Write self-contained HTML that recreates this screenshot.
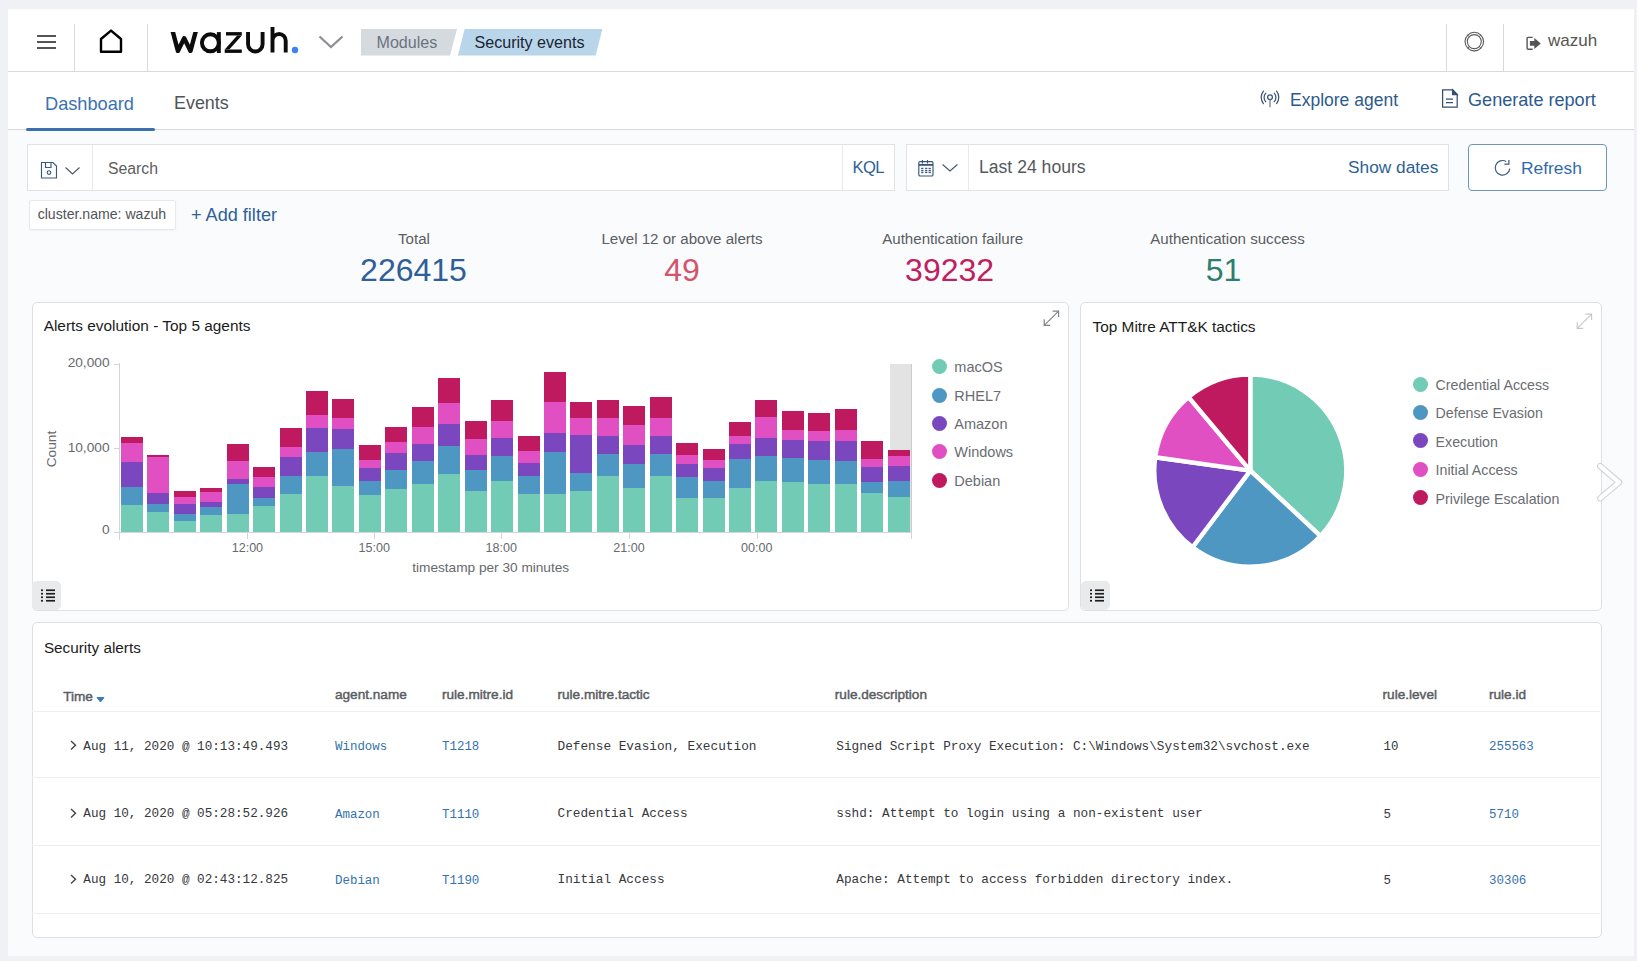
<!DOCTYPE html>
<html><head><meta charset="utf-8"><title>Wazuh - Security events</title>
<style>
html,body{margin:0;padding:0;}
body{width:1637px;height:961px;overflow:hidden;background:#f0f1f5;position:relative;font-family:'Liberation Sans',sans-serif;}
.t{position:absolute;white-space:nowrap;}
.r{position:absolute;}
</style></head><body>
<div class="r" style="left:8px;top:9px;width:1626px;height:947px;background:#fafbfd;"></div>
<div class="r" style="left:8px;top:9px;width:1626px;height:62px;background:#fff;"></div>
<div class="r" style="left:8px;top:71px;width:1626px;height:1px;background:#d9d9da;"></div>
<div class="r" style="left:74px;top:24px;width:1px;height:47px;background:#d9d9da;"></div>
<div class="r" style="left:147px;top:24px;width:1px;height:47px;background:#d9d9da;"></div>
<div class="r" style="left:1446px;top:24px;width:1px;height:47px;background:#d9d9da;"></div>
<div class="r" style="left:1503px;top:24px;width:1px;height:47px;background:#d9d9da;"></div>
<div class="r" style="left:37px;top:34.8px;width:19px;height:2.6000000000000014px;background:#555;"></div>
<div class="r" style="left:37px;top:40.8px;width:19px;height:2.6000000000000014px;background:#555;"></div>
<div class="r" style="left:37px;top:46.8px;width:19px;height:2.6000000000000014px;background:#555;"></div>
<svg class="r" style="left:96px;top:26px" width="30" height="30" viewBox="0 0 30 30"><path d="M5 13 L15 4.6 L25 13 L25 25.8 L5 25.8 Z" fill="none" stroke="#000" stroke-width="2.4" stroke-linejoin="round"/></svg>
<svg class="r" style="left:165px;top:20px" width="140" height="40" viewBox="0 0 140 40">
<defs><clipPath id="wc"><rect x="0" y="12.1" width="40" height="21"/></clipPath></defs>
<g fill="none" stroke="#0c0c0c" stroke-width="3.9" stroke-linecap="butt" stroke-linejoin="round">
<path d="M7.1 9 L12.9 30.9 L19.2 18.2 L25.5 30.9 L31.4 9" stroke-width="4.4" clip-path="url(#wc)"/>
<circle cx="45.4" cy="22.8" r="8.5"/><path d="M53.85 12.1 L53.85 33"/>
<path d="M83.05 12.1 L83.05 24.2 A7.27 7.27 0 0 0 97.6 24.2 L97.6 12.1"/>
<path d="M107.5 6.9 L107.5 32.6 M107.5 20.65 A6.6 6.6 0 0 1 120.7 20.65 L120.7 32.6"/>
</g>
<g fill="#0c0c0c"><rect x="61" y="12.1" width="15.8" height="3.4"/><rect x="59.7" y="29.5" width="17.1" height="3.4"/><path d="M72.2 15.4 L76.8 15.4 L64.3 29.6 L59.7 29.6 Z"/></g>
<circle cx="130" cy="30" r="3.2" fill="#3d82f1"/></svg>
<svg class="r" style="left:316px;top:33px" width="30" height="18" viewBox="0 0 30 18"><path d="M3.5 3.5 L15 14 L26.5 3.5" fill="none" stroke="#8e8f92" stroke-width="2.3"/></svg>
<svg class="r" style="left:355px;top:25px" width="260" height="35" viewBox="0 0 260 35"><path d="M6 4 L102 4 L95 30.5 L6 30.5 Z" fill="#d5dadf"/><path d="M109.6 4 L247.4 4 L240.7 30.5 L103 30.5 Z" fill="#b9d5ea"/></svg>
<div class="t" style="left:376.50px;top:34.37px;font-size:16.1px;line-height:16.1px;color:#6b7380;font-weight:normal;font-family:'Liberation Sans',sans-serif;">Modules</div>
<div class="t" style="left:474.50px;top:34.37px;font-size:16.1px;line-height:16.1px;color:#1b2433;font-weight:normal;font-family:'Liberation Sans',sans-serif;">Security events</div>
<svg class="r" style="left:1462px;top:30px" width="25" height="25" viewBox="0 0 25 25"><circle cx="12.3" cy="11.6" r="9.3" fill="none" stroke="#5a5a5a" stroke-width="1.1"/><circle cx="12.3" cy="11.6" r="7.0" fill="none" stroke="#5a5a5a" stroke-width="1.1"/><path d="M7.35 6.65 L5.7 5.0 M17.25 6.65 L18.9 5.0 M7.35 16.55 L5.7 18.2 M17.25 16.55 L18.9 18.2" stroke="#5a5a5a" stroke-width="1"/></svg>
<svg class="r" style="left:1524px;top:34px" width="20" height="18" viewBox="0 0 20 18"><path d="M8.6 3.4 L4.2 3.4 Q3.1 3.4 3.1 4.5 L3.1 14.2 Q3.1 15.3 4.2 15.3 L8.6 15.3" fill="none" stroke="#555" stroke-width="1.4"/><path d="M5.9 7.1 L10.3 7.1 L10.3 4.1 L16.8 9.4 L10.3 14.9 L10.3 11.8 L5.9 11.8 Z" fill="#555"/></svg>
<div class="t" style="left:1548.00px;top:32.01px;font-size:17px;line-height:17px;color:#555;font-weight:normal;font-family:'Liberation Sans',sans-serif;">wazuh</div>
<div class="r" style="left:8px;top:72px;width:1626px;height:57px;background:#fff;"></div>
<div class="r" style="left:8px;top:129px;width:1626px;height:1px;background:#d9d9da;"></div>
<div class="r" style="left:25.5px;top:127.5px;width:129.0px;height:3.0px;background:#3b70ae;border-radius:2px;"></div>
<div class="t" style="left:45.00px;top:94.59px;font-size:18.2px;line-height:18.2px;color:#3a72b2;font-weight:normal;font-family:'Liberation Sans',sans-serif;">Dashboard</div>
<div class="t" style="left:174.00px;top:95.35px;font-size:17.9px;line-height:17.9px;color:#505459;font-weight:normal;font-family:'Liberation Sans',sans-serif;">Events</div>
<svg class="r" style="left:1258px;top:88px" width="24" height="22" viewBox="0 0 24 22"><g fill="none" stroke="#3b5676" stroke-width="1.25" stroke-linecap="round">
<path d="M5.4 3.1 A10 10 0 0 0 5.4 15.6"/><path d="M7.8 5.1 A6.3 6.3 0 0 0 7.8 13.7"/><path d="M18.6 3.1 A10 10 0 0 1 18.6 15.6"/><path d="M16.2 5.1 A6.3 6.3 0 0 1 16.2 13.7"/>
<circle cx="12" cy="9.3" r="2.4"/><path d="M12 11.7 L12 18.7" stroke="#6f7c8c"/></g></svg>
<div class="t" style="left:1290.00px;top:91.69px;font-size:17.5px;line-height:17.5px;color:#2d5a8c;font-weight:normal;font-family:'Liberation Sans',sans-serif;">Explore agent</div>
<svg class="r" style="left:1439px;top:87px" width="22" height="24" viewBox="0 0 22 24"><g fill="none" stroke="#34506e" stroke-width="1.25">
<path d="M3.6 2.8 L13.6 2.8 L18.2 7.6 L18.2 20.1 L3.6 20.1 Z"/><path d="M13.6 2.8 L13.6 7.6 L18.2 7.6 Z" fill="#34506e"/><path d="M7 12.2 L14 12.2 M7 15.5 L14 15.5"/></g></svg>
<div class="t" style="left:1468.00px;top:90.98px;font-size:18.1px;line-height:18.1px;color:#2d5a8c;font-weight:normal;font-family:'Liberation Sans',sans-serif;">Generate report</div>
<div class="r" style="left:26.5px;top:144px;width:868.0px;height:46.5px;background:#fff;border:1px solid #e0e2e6;box-sizing:border-box;"></div>
<div class="r" style="left:92px;top:145px;width:1px;height:45px;background:#e6e9ee;"></div>
<div class="r" style="left:842px;top:145px;width:1px;height:45px;background:#e6e9ee;"></div>
<svg class="r" style="left:38px;top:158.5px" width="22" height="22" viewBox="0 0 22 22"><g fill="none" stroke="#3b5a7f" stroke-width="1.15">
<path d="M3.5 3.5 L15 3.5 L18.5 7 L18.5 19 L3.5 19 Z"/><path d="M7.5 3.5 L7.5 8.5 L13 8.5 L13 3.5"/><circle cx="11" cy="13.5" r="1.8"/></g></svg>
<svg class="r" style="left:63px;top:163.5px" width="20" height="14" viewBox="0 0 20 14"><path d="M2.5 3.5 L9.5 10 L16.5 3.5" fill="none" stroke="#4b5867" stroke-width="1.1"/></svg>
<div class="t" style="left:108.00px;top:160.63px;font-size:15.8px;line-height:15.8px;color:#5b5e63;font-weight:normal;font-family:'Liberation Sans',sans-serif;">Search</div>
<div class="t" style="left:852.50px;top:159.95px;font-size:16.6px;line-height:16.6px;color:#2d5f99;font-weight:normal;font-family:'Liberation Sans',sans-serif;letter-spacing:-0.6px;">KQL</div>
<div class="r" style="left:905.5px;top:144px;width:543.0px;height:46.5px;background:#fff;border:1px solid #e0e2e6;box-sizing:border-box;"></div>
<div class="r" style="left:968px;top:145px;width:1px;height:45px;background:#e6e9ee;"></div>
<svg class="r" style="left:915px;top:157px" width="22" height="22" viewBox="0 0 22 22"><g fill="none" stroke="#36587e" stroke-width="1.15">
<rect x="3.8" y="4.6" width="14.2" height="14.4" rx="1.3"/><path d="M3.8 7.9 L18 7.9" stroke-width="1.8"/><path d="M7.4 3 L7.4 6.5 M12.5 3 L12.5 6.5"/></g>
<g fill="#36587e"><rect x="6.2" y="10.8" width="2.2" height="1.3"/><rect x="10.1" y="10.8" width="2.2" height="1.3"/><rect x="13.6" y="10.8" width="2.2" height="1.3"/><rect x="6.2" y="12.9" width="2.2" height="1.3"/><rect x="10.1" y="12.9" width="2.2" height="1.3"/><rect x="13.6" y="12.9" width="2.2" height="1.3"/><rect x="6.2" y="14.8" width="2.2" height="1.3"/><rect x="10.1" y="14.8" width="2.2" height="1.3"/><rect x="13.6" y="14.8" width="2.2" height="1.3"/></g></svg>
<svg class="r" style="left:940px;top:161px" width="20" height="14" viewBox="0 0 20 14"><path d="M2.6 3.5 L10 10 L17.4 3.5" fill="none" stroke="#46556a" stroke-width="1.1"/></svg>
<div class="t" style="left:979.00px;top:159.10px;font-size:17.6px;line-height:17.6px;color:#55585d;font-weight:normal;font-family:'Liberation Sans',sans-serif;">Last 24 hours</div>
<div class="t" style="left:1348.00px;top:159.36px;font-size:17.3px;line-height:17.3px;color:#2d5f99;font-weight:normal;font-family:'Liberation Sans',sans-serif;">Show dates</div>
<div class="r" style="left:1468px;top:144px;width:139px;height:47px;background:#fff;border:1px solid #6e95be;border-radius:4px;box-sizing:border-box;"></div>
<svg class="r" style="left:1492px;top:158px" width="20" height="20" viewBox="0 0 20 20"><g fill="none" stroke="#3f5a78" stroke-width="1.2"><path d="M17.8 10.6 A7.3 7.3 0 1 1 14.15 3.48"/><path d="M12.4 6.1 L16.9 6.1 L16.9 2.0"/></g></svg>
<div class="t" style="left:1521.00px;top:160.27px;font-size:17.4px;line-height:17.4px;color:#2f6bab;font-weight:normal;font-family:'Liberation Sans',sans-serif;">Refresh</div>
<div class="r" style="left:28.5px;top:200px;width:147.0px;height:30px;background:#fff;border:1px solid #e6e9ef;box-sizing:border-box;border-radius:2px;box-shadow:0 1px 2px rgba(0,0,0,0.04);"></div>
<div class="t" style="left:37.70px;top:207.36px;font-size:14.1px;line-height:14.1px;color:#505359;font-weight:normal;font-family:'Liberation Sans',sans-serif;">cluster.name: wazuh</div>
<div class="t" style="left:191.00px;top:205.68px;font-size:18.1px;line-height:18.1px;color:#2d5f99;font-weight:normal;font-family:'Liberation Sans',sans-serif;">+ Add filter</div>
<div class="t" style="left:14.00px;width:800px;text-align:center;top:231.02px;font-size:15.1px;line-height:15.1px;color:#5a5d62;font-weight:normal;font-family:'Liberation Sans',sans-serif;">Total</div>
<div class="t" style="left:13.50px;width:800px;text-align:center;top:253.51px;font-size:32px;line-height:32px;color:#2f5e99;font-weight:normal;font-family:'Liberation Sans',sans-serif;">226415</div>
<div class="t" style="left:282.00px;width:800px;text-align:center;top:231.02px;font-size:15.1px;line-height:15.1px;color:#5a5d62;font-weight:normal;font-family:'Liberation Sans',sans-serif;">Level 12 or above alerts</div>
<div class="t" style="left:282.00px;width:800px;text-align:center;top:253.51px;font-size:32px;line-height:32px;color:#d4546b;font-weight:normal;font-family:'Liberation Sans',sans-serif;">49</div>
<div class="t" style="left:552.70px;width:800px;text-align:center;top:231.02px;font-size:15.1px;line-height:15.1px;color:#5a5d62;font-weight:normal;font-family:'Liberation Sans',sans-serif;">Authentication failure</div>
<div class="t" style="left:549.60px;width:800px;text-align:center;top:253.51px;font-size:32px;line-height:32px;color:#bf2060;font-weight:normal;font-family:'Liberation Sans',sans-serif;">39232</div>
<div class="t" style="left:827.50px;width:800px;text-align:center;top:231.02px;font-size:15.1px;line-height:15.1px;color:#5a5d62;font-weight:normal;font-family:'Liberation Sans',sans-serif;">Authentication success</div>
<div class="t" style="left:823.50px;width:800px;text-align:center;top:253.51px;font-size:32px;line-height:32px;color:#2e7e6e;font-weight:normal;font-family:'Liberation Sans',sans-serif;">51</div>
<div class="r" style="left:32px;top:302px;width:1037px;height:309px;background:#fff;border:1px solid #dfe0e3;border-radius:5px;box-sizing:border-box;"></div>
<div class="r" style="left:1080px;top:302px;width:522px;height:309px;background:#fff;border:1px solid #dfe0e3;border-radius:5px;box-sizing:border-box;"></div>
<div class="t" style="left:43.70px;top:318.16px;font-size:15.4px;line-height:15.4px;color:#1a1c21;font-weight:normal;font-family:'Liberation Sans',sans-serif;">Alerts evolution - Top 5 agents</div>
<div class="t" style="left:1092.50px;top:319.16px;font-size:15.4px;line-height:15.4px;color:#1a1c21;font-weight:normal;font-family:'Liberation Sans',sans-serif;">Top Mitre ATT&amp;K tactics</div>
<svg class="r" style="left:1040.5px;top:309px" width="20" height="20" viewBox="0 0 20 20"><g fill="none" stroke="#7e8185" stroke-width="1.15"><path d="M3.2 16.3 L17.6 2.1"/><path d="M11.6 2.1 L17.6 2.1 L17.6 8.1"/><path d="M3.2 10.3 L3.2 16.3 L9.2 16.3"/></g></svg>
<svg class="r" style="left:1574px;top:311.5px" width="20" height="20" viewBox="0 0 20 20"><g fill="none" stroke="#c5c8cc" stroke-width="1.15"><path d="M3.2 16.3 L17.6 2.1"/><path d="M11.6 2.1 L17.6 2.1 L17.6 8.1"/><path d="M3.2 10.3 L3.2 16.3 L9.2 16.3"/></g></svg>
<div class="r" style="left:32.2px;top:580.8px;width:29.099999999999994px;height:29.0px;background:#e9eaec;border-radius:5px;"></div>
<svg class="r" style="left:39px;top:588px" width="18" height="15" viewBox="0 0 18 15"><g fill="#1e1e1e"><rect x="2" y="1.4" width="2" height="1.7"/><rect x="7" y="1.4" width="9" height="1.7"/><rect x="2" y="4.9" width="2" height="1.7"/><rect x="7" y="4.9" width="9" height="1.7"/><rect x="2" y="8.4" width="2" height="1.7"/><rect x="7" y="8.4" width="9" height="1.7"/><rect x="2" y="11.9" width="2" height="1.7"/><rect x="7" y="11.9" width="9" height="1.7"/></g></svg>
<div class="r" style="left:1081.2px;top:580.8px;width:29.09999999999991px;height:29.0px;background:#e9eaec;border-radius:5px;"></div>
<svg class="r" style="left:1088px;top:588px" width="18" height="15" viewBox="0 0 18 15"><g fill="#1e1e1e"><rect x="2" y="1.4" width="2" height="1.7"/><rect x="7" y="1.4" width="9" height="1.7"/><rect x="2" y="4.9" width="2" height="1.7"/><rect x="7" y="4.9" width="9" height="1.7"/><rect x="2" y="8.4" width="2" height="1.7"/><rect x="7" y="8.4" width="9" height="1.7"/><rect x="2" y="11.9" width="2" height="1.7"/><rect x="7" y="11.9" width="9" height="1.7"/></g></svg>
<svg class="r" style="left:0px;top:0px" width="1637" height="961" viewBox="0 0 1637 961" shape-rendering="crispEdges">
<rect x="890" y="364" width="22" height="168" fill="#e3e3e3"/><rect x="911" y="364" width="1" height="168" fill="#cbcbcb"/>
<rect x="121.0" y="504.7" width="22" height="27.3" fill="#72cbb5"/>
<rect x="121.0" y="487.3" width="22" height="17.4" fill="#4d97c2"/>
<rect x="121.0" y="461.7" width="22" height="25.6" fill="#7a47be"/>
<rect x="121.0" y="443.3" width="22" height="18.4" fill="#e050c2"/>
<rect x="121.0" y="436.8" width="22" height="6.5" fill="#bf1a5f"/>
<rect x="147.4" y="511.7" width="22" height="20.3" fill="#72cbb5"/>
<rect x="147.4" y="503.8" width="22" height="7.9" fill="#4d97c2"/>
<rect x="147.4" y="492.9" width="22" height="10.9" fill="#7a47be"/>
<rect x="147.4" y="456.8" width="22" height="36.1" fill="#e050c2"/>
<rect x="147.4" y="454.6" width="22" height="2.2" fill="#bf1a5f"/>
<rect x="173.9" y="520.6" width="22" height="11.4" fill="#72cbb5"/>
<rect x="173.9" y="513.9" width="22" height="6.7" fill="#4d97c2"/>
<rect x="173.9" y="504.2" width="22" height="9.7" fill="#7a47be"/>
<rect x="173.9" y="496.7" width="22" height="7.5" fill="#e050c2"/>
<rect x="173.9" y="491.1" width="22" height="5.6" fill="#bf1a5f"/>
<rect x="200.3" y="515.4" width="22" height="16.6" fill="#72cbb5"/>
<rect x="200.3" y="507.0" width="22" height="8.4" fill="#4d97c2"/>
<rect x="200.3" y="501.9" width="22" height="5.1" fill="#7a47be"/>
<rect x="200.3" y="491.6" width="22" height="10.3" fill="#e050c2"/>
<rect x="200.3" y="488.3" width="22" height="3.3" fill="#bf1a5f"/>
<rect x="226.7" y="513.9" width="22" height="18.1" fill="#72cbb5"/>
<rect x="226.7" y="483.6" width="22" height="30.3" fill="#4d97c2"/>
<rect x="226.7" y="478.9" width="22" height="4.7" fill="#7a47be"/>
<rect x="226.7" y="460.7" width="22" height="18.2" fill="#e050c2"/>
<rect x="226.7" y="443.7" width="22" height="17.0" fill="#bf1a5f"/>
<rect x="253.2" y="505.7" width="22" height="26.3" fill="#72cbb5"/>
<rect x="253.2" y="497.6" width="22" height="8.1" fill="#4d97c2"/>
<rect x="253.2" y="487.0" width="22" height="10.6" fill="#7a47be"/>
<rect x="253.2" y="476.6" width="22" height="10.4" fill="#e050c2"/>
<rect x="253.2" y="467.3" width="22" height="9.3" fill="#bf1a5f"/>
<rect x="279.6" y="493.9" width="22" height="38.1" fill="#72cbb5"/>
<rect x="279.6" y="475.7" width="22" height="18.2" fill="#4d97c2"/>
<rect x="279.6" y="456.8" width="22" height="18.9" fill="#7a47be"/>
<rect x="279.6" y="446.5" width="22" height="10.3" fill="#e050c2"/>
<rect x="279.6" y="428.0" width="22" height="18.5" fill="#bf1a5f"/>
<rect x="306.0" y="476.1" width="22" height="55.9" fill="#72cbb5"/>
<rect x="306.0" y="452.3" width="22" height="23.8" fill="#4d97c2"/>
<rect x="306.0" y="428.0" width="22" height="24.3" fill="#7a47be"/>
<rect x="306.0" y="414.7" width="22" height="13.3" fill="#e050c2"/>
<rect x="306.0" y="390.9" width="22" height="23.8" fill="#bf1a5f"/>
<rect x="332.4" y="485.8" width="22" height="46.2" fill="#72cbb5"/>
<rect x="332.4" y="448.6" width="22" height="37.2" fill="#4d97c2"/>
<rect x="332.4" y="429.3" width="22" height="19.3" fill="#7a47be"/>
<rect x="332.4" y="418.0" width="22" height="11.3" fill="#e050c2"/>
<rect x="332.4" y="399.3" width="22" height="18.7" fill="#bf1a5f"/>
<rect x="358.9" y="494.8" width="22" height="37.2" fill="#72cbb5"/>
<rect x="358.9" y="480.8" width="22" height="14.0" fill="#4d97c2"/>
<rect x="358.9" y="467.7" width="22" height="13.1" fill="#7a47be"/>
<rect x="358.9" y="459.8" width="22" height="7.9" fill="#e050c2"/>
<rect x="358.9" y="445.2" width="22" height="14.6" fill="#bf1a5f"/>
<rect x="385.3" y="488.8" width="22" height="43.2" fill="#72cbb5"/>
<rect x="385.3" y="470.1" width="22" height="18.7" fill="#4d97c2"/>
<rect x="385.3" y="452.7" width="22" height="17.4" fill="#7a47be"/>
<rect x="385.3" y="441.8" width="22" height="10.9" fill="#e050c2"/>
<rect x="385.3" y="426.5" width="22" height="15.3" fill="#bf1a5f"/>
<rect x="411.7" y="483.9" width="22" height="48.1" fill="#72cbb5"/>
<rect x="411.7" y="460.7" width="22" height="23.2" fill="#4d97c2"/>
<rect x="411.7" y="443.7" width="22" height="17.0" fill="#7a47be"/>
<rect x="411.7" y="426.8" width="22" height="16.9" fill="#e050c2"/>
<rect x="411.7" y="407.2" width="22" height="19.6" fill="#bf1a5f"/>
<rect x="438.2" y="473.8" width="22" height="58.2" fill="#72cbb5"/>
<rect x="438.2" y="445.8" width="22" height="28.0" fill="#4d97c2"/>
<rect x="438.2" y="424.2" width="22" height="21.6" fill="#7a47be"/>
<rect x="438.2" y="403.4" width="22" height="20.8" fill="#e050c2"/>
<rect x="438.2" y="378.3" width="22" height="25.1" fill="#bf1a5f"/>
<rect x="464.6" y="491.1" width="22" height="40.9" fill="#72cbb5"/>
<rect x="464.6" y="469.9" width="22" height="21.2" fill="#4d97c2"/>
<rect x="464.6" y="454.6" width="22" height="15.3" fill="#7a47be"/>
<rect x="464.6" y="438.6" width="22" height="16.0" fill="#e050c2"/>
<rect x="464.6" y="421.2" width="22" height="17.4" fill="#bf1a5f"/>
<rect x="491.0" y="480.8" width="22" height="51.2" fill="#72cbb5"/>
<rect x="491.0" y="456.0" width="22" height="24.8" fill="#4d97c2"/>
<rect x="491.0" y="438.1" width="22" height="17.9" fill="#7a47be"/>
<rect x="491.0" y="420.9" width="22" height="17.2" fill="#e050c2"/>
<rect x="491.0" y="399.9" width="22" height="21.0" fill="#bf1a5f"/>
<rect x="517.5" y="493.5" width="22" height="38.5" fill="#72cbb5"/>
<rect x="517.5" y="476.1" width="22" height="17.4" fill="#4d97c2"/>
<rect x="517.5" y="463.0" width="22" height="13.1" fill="#7a47be"/>
<rect x="517.5" y="451.2" width="22" height="11.8" fill="#e050c2"/>
<rect x="517.5" y="436.4" width="22" height="14.8" fill="#bf1a5f"/>
<rect x="543.9" y="493.9" width="22" height="38.1" fill="#72cbb5"/>
<rect x="543.9" y="451.7" width="22" height="42.2" fill="#4d97c2"/>
<rect x="543.9" y="433.4" width="22" height="18.3" fill="#7a47be"/>
<rect x="543.9" y="402.1" width="22" height="31.3" fill="#e050c2"/>
<rect x="543.9" y="372.2" width="22" height="29.9" fill="#bf1a5f"/>
<rect x="570.3" y="491.1" width="22" height="40.9" fill="#72cbb5"/>
<rect x="570.3" y="473.3" width="22" height="17.8" fill="#4d97c2"/>
<rect x="570.3" y="435.3" width="22" height="38.0" fill="#7a47be"/>
<rect x="570.3" y="417.5" width="22" height="17.8" fill="#e050c2"/>
<rect x="570.3" y="402.1" width="22" height="15.4" fill="#bf1a5f"/>
<rect x="596.7" y="475.7" width="22" height="56.3" fill="#72cbb5"/>
<rect x="596.7" y="453.6" width="22" height="22.1" fill="#4d97c2"/>
<rect x="596.7" y="436.4" width="22" height="17.2" fill="#7a47be"/>
<rect x="596.7" y="417.5" width="22" height="18.9" fill="#e050c2"/>
<rect x="596.7" y="399.9" width="22" height="17.6" fill="#bf1a5f"/>
<rect x="623.2" y="487.7" width="22" height="44.3" fill="#72cbb5"/>
<rect x="623.2" y="463.9" width="22" height="23.8" fill="#4d97c2"/>
<rect x="623.2" y="445.2" width="22" height="18.7" fill="#7a47be"/>
<rect x="623.2" y="425.0" width="22" height="20.2" fill="#e050c2"/>
<rect x="623.2" y="405.9" width="22" height="19.1" fill="#bf1a5f"/>
<rect x="649.6" y="476.1" width="22" height="55.9" fill="#72cbb5"/>
<rect x="649.6" y="453.6" width="22" height="22.5" fill="#4d97c2"/>
<rect x="649.6" y="436.4" width="22" height="17.2" fill="#7a47be"/>
<rect x="649.6" y="417.5" width="22" height="18.9" fill="#e050c2"/>
<rect x="649.6" y="396.9" width="22" height="20.6" fill="#bf1a5f"/>
<rect x="676.0" y="498.0" width="22" height="34.0" fill="#72cbb5"/>
<rect x="676.0" y="476.6" width="22" height="21.4" fill="#4d97c2"/>
<rect x="676.0" y="464.3" width="22" height="12.3" fill="#7a47be"/>
<rect x="676.0" y="454.9" width="22" height="9.4" fill="#e050c2"/>
<rect x="676.0" y="443.3" width="22" height="11.6" fill="#bf1a5f"/>
<rect x="702.5" y="498.0" width="22" height="34.0" fill="#72cbb5"/>
<rect x="702.5" y="481.1" width="22" height="16.9" fill="#4d97c2"/>
<rect x="702.5" y="468.0" width="22" height="13.1" fill="#7a47be"/>
<rect x="702.5" y="459.6" width="22" height="8.4" fill="#e050c2"/>
<rect x="702.5" y="449.3" width="22" height="10.3" fill="#bf1a5f"/>
<rect x="728.9" y="487.9" width="22" height="44.1" fill="#72cbb5"/>
<rect x="728.9" y="458.9" width="22" height="29.0" fill="#4d97c2"/>
<rect x="728.9" y="444.3" width="22" height="14.6" fill="#7a47be"/>
<rect x="728.9" y="435.8" width="22" height="8.5" fill="#e050c2"/>
<rect x="728.9" y="421.8" width="22" height="14.0" fill="#bf1a5f"/>
<rect x="755.3" y="480.8" width="22" height="51.2" fill="#72cbb5"/>
<rect x="755.3" y="456.0" width="22" height="24.8" fill="#4d97c2"/>
<rect x="755.3" y="437.7" width="22" height="18.3" fill="#7a47be"/>
<rect x="755.3" y="417.1" width="22" height="20.6" fill="#e050c2"/>
<rect x="755.3" y="399.9" width="22" height="17.2" fill="#bf1a5f"/>
<rect x="781.8" y="482.3" width="22" height="49.7" fill="#72cbb5"/>
<rect x="781.8" y="457.9" width="22" height="24.4" fill="#4d97c2"/>
<rect x="781.8" y="439.9" width="22" height="18.0" fill="#7a47be"/>
<rect x="781.8" y="429.6" width="22" height="10.3" fill="#e050c2"/>
<rect x="781.8" y="410.9" width="22" height="18.7" fill="#bf1a5f"/>
<rect x="808.2" y="483.9" width="22" height="48.1" fill="#72cbb5"/>
<rect x="808.2" y="459.6" width="22" height="24.3" fill="#4d97c2"/>
<rect x="808.2" y="441.1" width="22" height="18.5" fill="#7a47be"/>
<rect x="808.2" y="430.8" width="22" height="10.3" fill="#e050c2"/>
<rect x="808.2" y="412.8" width="22" height="18.0" fill="#bf1a5f"/>
<rect x="834.6" y="483.9" width="22" height="48.1" fill="#72cbb5"/>
<rect x="834.6" y="461.1" width="22" height="22.8" fill="#4d97c2"/>
<rect x="834.6" y="440.9" width="22" height="20.2" fill="#7a47be"/>
<rect x="834.6" y="429.6" width="22" height="11.3" fill="#e050c2"/>
<rect x="834.6" y="408.7" width="22" height="20.9" fill="#bf1a5f"/>
<rect x="861.0" y="493.3" width="22" height="38.7" fill="#72cbb5"/>
<rect x="861.0" y="481.7" width="22" height="11.6" fill="#4d97c2"/>
<rect x="861.0" y="467.1" width="22" height="14.6" fill="#7a47be"/>
<rect x="861.0" y="458.9" width="22" height="8.2" fill="#e050c2"/>
<rect x="861.0" y="440.9" width="22" height="18.0" fill="#bf1a5f"/>
<rect x="887.5" y="497.1" width="22" height="34.9" fill="#72cbb5"/>
<rect x="887.5" y="480.8" width="22" height="16.3" fill="#4d97c2"/>
<rect x="887.5" y="466.3" width="22" height="14.5" fill="#7a47be"/>
<rect x="887.5" y="455.9" width="22" height="10.4" fill="#e050c2"/>
<rect x="887.5" y="450.2" width="22" height="5.7" fill="#bf1a5f"/>
<rect x="119" y="363" width="1" height="177" fill="#d3d5d9"/>
<rect x="119" y="531.5" width="792" height="1" fill="#d3d5d9"/>
<rect x="114" y="363.5" width="5" height="1" fill="#d3d5d9"/>
<rect x="114" y="447.7" width="5" height="1" fill="#d3d5d9"/>
<rect x="114" y="531.5" width="5" height="1" fill="#d3d5d9"/>
<rect x="247.4" y="532" width="1" height="7" fill="#d3d5d9"/>
<rect x="374.3" y="532" width="1" height="7" fill="#d3d5d9"/>
<rect x="501.3" y="532" width="1" height="7" fill="#d3d5d9"/>
<rect x="629.0" y="532" width="1" height="7" fill="#d3d5d9"/>
<rect x="756.8" y="532" width="1" height="7" fill="#d3d5d9"/>
<rect x="910.5" y="532" width="1" height="7" fill="#d3d5d9"/>
</svg>
<div class="t" style="left:-290.50px;width:400px;text-align:right;top:356.40px;font-size:13.7px;line-height:13.7px;color:#66696e;font-weight:normal;font-family:'Liberation Sans',sans-serif;">20,000</div>
<div class="t" style="left:-290.50px;width:400px;text-align:right;top:440.60px;font-size:13.7px;line-height:13.7px;color:#66696e;font-weight:normal;font-family:'Liberation Sans',sans-serif;">10,000</div>
<div class="t" style="left:-290.50px;width:400px;text-align:right;top:523.40px;font-size:13.7px;line-height:13.7px;color:#66696e;font-weight:normal;font-family:'Liberation Sans',sans-serif;">0</div>
<div class="t" style="left:21.5px;top:439px;width:60px;height:20px;line-height:20px;text-align:center;font-size:13.7px;color:#66696e;transform:rotate(-90deg);">Count</div>
<div class="t" style="left:-152.60px;width:800px;text-align:center;top:541.58px;font-size:12.55px;line-height:12.55px;color:#66696e;font-weight:normal;font-family:'Liberation Sans',sans-serif;">12:00</div>
<div class="t" style="left:-25.70px;width:800px;text-align:center;top:541.58px;font-size:12.55px;line-height:12.55px;color:#66696e;font-weight:normal;font-family:'Liberation Sans',sans-serif;">15:00</div>
<div class="t" style="left:101.30px;width:800px;text-align:center;top:541.58px;font-size:12.55px;line-height:12.55px;color:#66696e;font-weight:normal;font-family:'Liberation Sans',sans-serif;">18:00</div>
<div class="t" style="left:229.00px;width:800px;text-align:center;top:541.58px;font-size:12.55px;line-height:12.55px;color:#66696e;font-weight:normal;font-family:'Liberation Sans',sans-serif;">21:00</div>
<div class="t" style="left:356.80px;width:800px;text-align:center;top:541.58px;font-size:12.55px;line-height:12.55px;color:#66696e;font-weight:normal;font-family:'Liberation Sans',sans-serif;">00:00</div>
<div class="t" style="left:90.70px;width:800px;text-align:center;top:560.75px;font-size:13.65px;line-height:13.65px;color:#66696e;font-weight:normal;font-family:'Liberation Sans',sans-serif;">timestamp per 30 minutes</div>
<div class="r" style="left:931.5px;top:359.4px;width:15.0px;height:15.0px;background:#72cbb5;border-radius:50%;"></div>
<div class="t" style="left:954.30px;top:360.23px;font-size:14.5px;line-height:14.5px;color:#6a6d72;font-weight:normal;font-family:'Liberation Sans',sans-serif;">macOS</div>
<div class="r" style="left:931.5px;top:387.75px;width:15.0px;height:15.0px;background:#4d97c2;border-radius:50%;"></div>
<div class="t" style="left:954.30px;top:388.58px;font-size:14.5px;line-height:14.5px;color:#6a6d72;font-weight:normal;font-family:'Liberation Sans',sans-serif;">RHEL7</div>
<div class="r" style="left:931.5px;top:416.09999999999997px;width:15.0px;height:15.0px;background:#7a47be;border-radius:50%;"></div>
<div class="t" style="left:954.30px;top:416.93px;font-size:14.5px;line-height:14.5px;color:#6a6d72;font-weight:normal;font-family:'Liberation Sans',sans-serif;">Amazon</div>
<div class="r" style="left:931.5px;top:444.45px;width:15.0px;height:15.0px;background:#e050c2;border-radius:50%;"></div>
<div class="t" style="left:954.30px;top:445.28px;font-size:14.5px;line-height:14.5px;color:#6a6d72;font-weight:normal;font-family:'Liberation Sans',sans-serif;">Windows</div>
<div class="r" style="left:931.5px;top:472.79999999999995px;width:15.0px;height:15.0px;background:#bf1a5f;border-radius:50%;"></div>
<div class="t" style="left:954.30px;top:473.63px;font-size:14.5px;line-height:14.5px;color:#6a6d72;font-weight:normal;font-family:'Liberation Sans',sans-serif;">Debian</div>
<svg class="r" style="left:0px;top:0px" width="1637" height="961" viewBox="0 0 1637 961">
<path d="M1250.3 470.6 L1250.30 374.60 A96.0 96.0 0 0 1 1320.51 536.07 Z" fill="#72cbb5" stroke="#fff" stroke-width="4.4" stroke-linejoin="round"/>
<path d="M1250.3 470.6 L1320.51 536.07 A96.0 96.0 0 0 1 1192.53 547.27 Z" fill="#4d97c2" stroke="#fff" stroke-width="4.4" stroke-linejoin="round"/>
<path d="M1250.3 470.6 L1192.53 547.27 A96.0 96.0 0 0 1 1155.23 457.24 Z" fill="#7a47be" stroke="#fff" stroke-width="4.4" stroke-linejoin="round"/>
<path d="M1250.3 470.6 L1155.23 457.24 A96.0 96.0 0 0 1 1188.59 397.06 Z" fill="#e050c2" stroke="#fff" stroke-width="4.4" stroke-linejoin="round"/>
<path d="M1250.3 470.6 L1188.59 397.06 A96.0 96.0 0 0 1 1250.30 374.60 Z" fill="#bf1a5f" stroke="#fff" stroke-width="4.4" stroke-linejoin="round"/>
</svg>
<div class="r" style="left:1412.5px;top:376.5px;width:15.0px;height:15.0px;background:#72cbb5;border-radius:50%;"></div>
<div class="t" style="left:1435.60px;top:377.98px;font-size:14.2px;line-height:14.2px;color:#6a6d72;font-weight:normal;font-family:'Liberation Sans',sans-serif;">Credential Access</div>
<div class="r" style="left:1412.5px;top:404.9px;width:15.0px;height:15.0px;background:#4d97c2;border-radius:50%;"></div>
<div class="t" style="left:1435.60px;top:406.38px;font-size:14.2px;line-height:14.2px;color:#6a6d72;font-weight:normal;font-family:'Liberation Sans',sans-serif;">Defense Evasion</div>
<div class="r" style="left:1412.5px;top:433.3px;width:15.0px;height:15.0px;background:#7a47be;border-radius:50%;"></div>
<div class="t" style="left:1435.60px;top:434.78px;font-size:14.2px;line-height:14.2px;color:#6a6d72;font-weight:normal;font-family:'Liberation Sans',sans-serif;">Execution</div>
<div class="r" style="left:1412.5px;top:461.7px;width:15.0px;height:15.0px;background:#e050c2;border-radius:50%;"></div>
<div class="t" style="left:1435.60px;top:463.18px;font-size:14.2px;line-height:14.2px;color:#6a6d72;font-weight:normal;font-family:'Liberation Sans',sans-serif;">Initial Access</div>
<div class="r" style="left:1412.5px;top:490.1px;width:15.0px;height:15.0px;background:#bf1a5f;border-radius:50%;"></div>
<div class="t" style="left:1435.60px;top:491.58px;font-size:14.2px;line-height:14.2px;color:#6a6d72;font-weight:normal;font-family:'Liberation Sans',sans-serif;">Privilege Escalation</div>
<svg class="r" style="left:1592px;top:458px" width="36" height="48" viewBox="0 0 36 48"><path d="M8.2 8.2 L27 24.3 L8.2 40.4" fill="none" stroke="#c9cbcf" stroke-width="6.4" stroke-linecap="round" stroke-linejoin="round" opacity="0.85"/><path d="M8.2 8.2 L27 24.3 L8.2 40.4" fill="none" stroke="#fff" stroke-width="4.2" stroke-linecap="round" stroke-linejoin="round"/></svg>
<div class="r" style="left:31.5px;top:622px;width:1570.5px;height:316px;background:#fff;border:1px solid #dfe0e3;border-radius:5px;box-sizing:border-box;"></div>
<div class="t" style="left:43.90px;top:640.45px;font-size:15.3px;line-height:15.3px;color:#1a1c21;font-weight:normal;font-family:'Liberation Sans',sans-serif;">Security alerts</div>
<div class="t" style="left:63.20px;top:689.69px;font-size:13.6px;line-height:13.6px;color:#5a5d62;font-weight:normal;font-family:'Liberation Sans',sans-serif;-webkit-text-stroke:0.45px #5a5d62;">Time</div>
<svg class="r" style="left:95px;top:695px" width="11" height="9" viewBox="0 0 11 9"><path d="M2 2.5 L9 2.5 L5.5 7 Z" fill="#3f7cb5" stroke="#3f7cb5" stroke-width="1" stroke-linejoin="round"/></svg>
<div class="t" style="left:335.00px;top:688.09px;font-size:13.6px;line-height:13.6px;color:#5a5d62;font-weight:normal;font-family:'Liberation Sans',sans-serif;-webkit-text-stroke:0.45px #5a5d62;">agent.name</div>
<div class="t" style="left:442.00px;top:688.09px;font-size:13.6px;line-height:13.6px;color:#5a5d62;font-weight:normal;font-family:'Liberation Sans',sans-serif;-webkit-text-stroke:0.45px #5a5d62;">rule.mitre.id</div>
<div class="t" style="left:557.50px;top:688.09px;font-size:13.6px;line-height:13.6px;color:#5a5d62;font-weight:normal;font-family:'Liberation Sans',sans-serif;-webkit-text-stroke:0.45px #5a5d62;">rule.mitre.tactic</div>
<div class="t" style="left:834.80px;top:688.09px;font-size:13.6px;line-height:13.6px;color:#5a5d62;font-weight:normal;font-family:'Liberation Sans',sans-serif;-webkit-text-stroke:0.45px #5a5d62;">rule.description</div>
<div class="t" style="left:1382.60px;top:688.09px;font-size:13.6px;line-height:13.6px;color:#5a5d62;font-weight:normal;font-family:'Liberation Sans',sans-serif;-webkit-text-stroke:0.45px #5a5d62;">rule.level</div>
<div class="t" style="left:1489.00px;top:688.09px;font-size:13.6px;line-height:13.6px;color:#5a5d62;font-weight:normal;font-family:'Liberation Sans',sans-serif;-webkit-text-stroke:0.45px #5a5d62;">rule.id</div>
<div class="r" style="left:32px;top:711px;width:1568px;height:1px;background:#eeeff0;"></div>
<div class="r" style="left:32px;top:777px;width:1568px;height:1px;background:#eeeff0;"></div>
<div class="r" style="left:32px;top:845px;width:1568px;height:1px;background:#eeeff0;"></div>
<div class="r" style="left:32px;top:913px;width:1568px;height:1px;background:#eeeff0;"></div>
<svg class="r" style="left:67px;top:738.4px" width="12" height="14" viewBox="0 0 12 14"><path d="M4 3 L8.5 7.2 L4 11.4" fill="none" stroke="#444" stroke-width="1.4"/></svg>
<div class="t" style="left:83.30px;top:740.70px;font-size:12.65px;line-height:12.65px;color:#36383c;font-weight:normal;font-family:'Liberation Mono',monospace;">Aug 11, 2020 @ 10:13:49.493</div>
<div class="t" style="left:335.00px;top:741.46px;font-size:12.45px;line-height:12.45px;color:#3572b0;font-weight:normal;font-family:'Liberation Mono',monospace;">Windows</div>
<div class="t" style="left:442.00px;top:741.46px;font-size:12.45px;line-height:12.45px;color:#3572b0;font-weight:normal;font-family:'Liberation Mono',monospace;">T1218</div>
<div class="t" style="left:557.50px;top:740.63px;font-size:12.75px;line-height:12.75px;color:#36383c;font-weight:normal;font-family:'Liberation Mono',monospace;">Defense Evasion, Execution</div>
<div class="t" style="left:836.30px;top:740.65px;font-size:12.72px;line-height:12.72px;color:#36383c;font-weight:normal;font-family:'Liberation Mono',monospace;">Signed Script Proxy Execution: C:\Windows\System32\svchost.exe</div>
<div class="t" style="left:1383.50px;top:741.46px;font-size:12.45px;line-height:12.45px;color:#36383c;font-weight:normal;font-family:'Liberation Mono',monospace;">10</div>
<div class="t" style="left:1489.00px;top:741.46px;font-size:12.45px;line-height:12.45px;color:#3572b0;font-weight:normal;font-family:'Liberation Mono',monospace;">255563</div>
<svg class="r" style="left:67px;top:805.5px" width="12" height="14" viewBox="0 0 12 14"><path d="M4 3 L8.5 7.2 L4 11.4" fill="none" stroke="#444" stroke-width="1.4"/></svg>
<div class="t" style="left:83.30px;top:807.80px;font-size:12.65px;line-height:12.65px;color:#36383c;font-weight:normal;font-family:'Liberation Mono',monospace;">Aug 10, 2020 @ 05:28:52.926</div>
<div class="t" style="left:335.00px;top:808.56px;font-size:12.45px;line-height:12.45px;color:#3572b0;font-weight:normal;font-family:'Liberation Mono',monospace;">Amazon</div>
<div class="t" style="left:442.00px;top:808.56px;font-size:12.45px;line-height:12.45px;color:#3572b0;font-weight:normal;font-family:'Liberation Mono',monospace;">T1110</div>
<div class="t" style="left:557.50px;top:807.73px;font-size:12.75px;line-height:12.75px;color:#36383c;font-weight:normal;font-family:'Liberation Mono',monospace;">Credential Access</div>
<div class="t" style="left:836.30px;top:807.75px;font-size:12.72px;line-height:12.72px;color:#36383c;font-weight:normal;font-family:'Liberation Mono',monospace;">sshd: Attempt to login using a non-existent user</div>
<div class="t" style="left:1383.50px;top:808.56px;font-size:12.45px;line-height:12.45px;color:#36383c;font-weight:normal;font-family:'Liberation Mono',monospace;">5</div>
<div class="t" style="left:1489.00px;top:808.56px;font-size:12.45px;line-height:12.45px;color:#3572b0;font-weight:normal;font-family:'Liberation Mono',monospace;">5710</div>
<svg class="r" style="left:67px;top:871.6px" width="12" height="14" viewBox="0 0 12 14"><path d="M4 3 L8.5 7.2 L4 11.4" fill="none" stroke="#444" stroke-width="1.4"/></svg>
<div class="t" style="left:83.30px;top:873.90px;font-size:12.65px;line-height:12.65px;color:#36383c;font-weight:normal;font-family:'Liberation Mono',monospace;">Aug 10, 2020 @ 02:43:12.825</div>
<div class="t" style="left:335.00px;top:874.66px;font-size:12.45px;line-height:12.45px;color:#3572b0;font-weight:normal;font-family:'Liberation Mono',monospace;">Debian</div>
<div class="t" style="left:442.00px;top:874.66px;font-size:12.45px;line-height:12.45px;color:#3572b0;font-weight:normal;font-family:'Liberation Mono',monospace;">T1190</div>
<div class="t" style="left:557.50px;top:873.83px;font-size:12.75px;line-height:12.75px;color:#36383c;font-weight:normal;font-family:'Liberation Mono',monospace;">Initial Access</div>
<div class="t" style="left:836.30px;top:873.85px;font-size:12.72px;line-height:12.72px;color:#36383c;font-weight:normal;font-family:'Liberation Mono',monospace;">Apache: Attempt to access forbidden directory index.</div>
<div class="t" style="left:1383.50px;top:874.66px;font-size:12.45px;line-height:12.45px;color:#36383c;font-weight:normal;font-family:'Liberation Mono',monospace;">5</div>
<div class="t" style="left:1489.00px;top:874.66px;font-size:12.45px;line-height:12.45px;color:#3572b0;font-weight:normal;font-family:'Liberation Mono',monospace;">30306</div>
</body></html>
